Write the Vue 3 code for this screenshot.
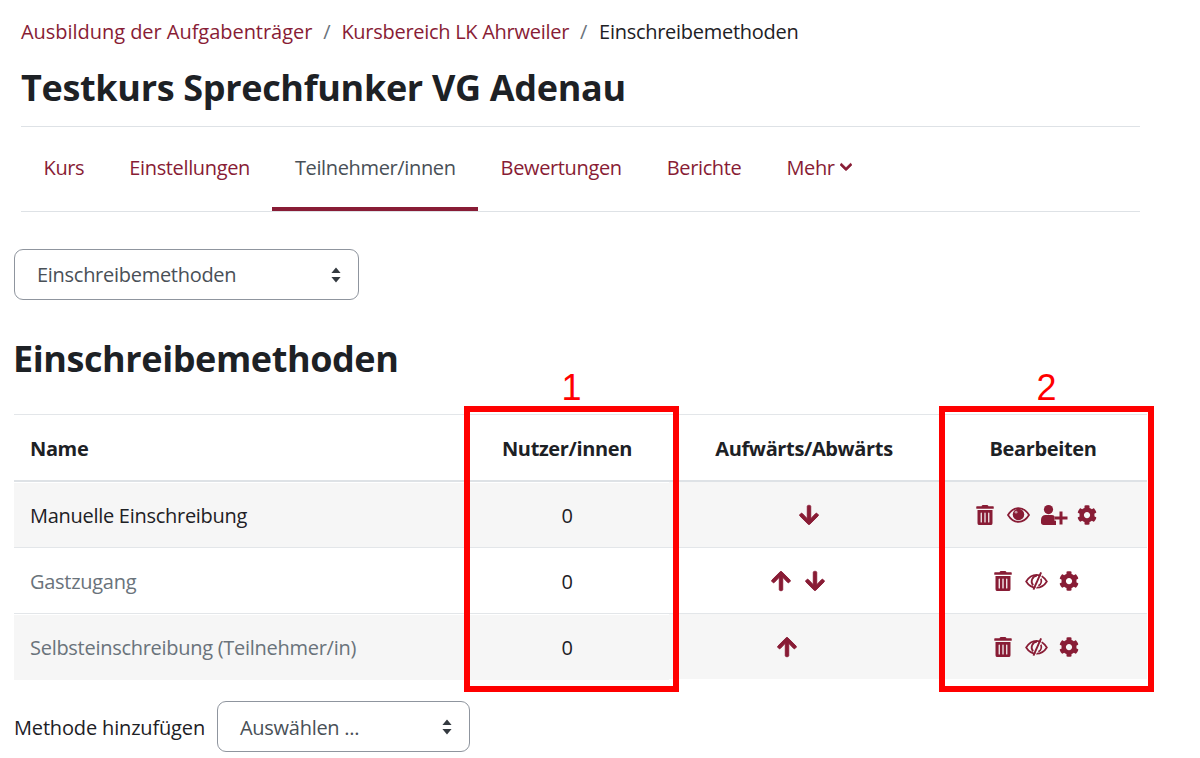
<template>
  <div class="page">
    <header class="course-head">
      <nav class="crumbs">
        <a class="first">Ausbildung der Aufgabenträger</a>
        <span class="sep">/</span>
        <a>Kursbereich LK Ahrweiler</a>
        <span class="sep">/</span>
        <span class="current">Einschreibemethoden</span>
      </nav>
      <h1>Testkurs Sprechfunker VG Adenau</h1>
      <ul class="tabs">
        <li v-for="tab in tabs" :key="tab" :class="{ active: tab === 'Teilnehmer/innen' }">{{ tab }}</li>
        <li class="more">
          Mehr
          <svg viewBox="0 0 448 512" class="chevron"><path :d="icons.chevron" /></svg>
        </li>
      </ul>
    </header>

    <div class="select-box top-select">
      <span>Einschreibemethoden</span>
      <svg viewBox="0 0 10 16" class="caret"><path d="M5 0.5 9.6 6H0.4zM5 15.5 0.4 10h9.2z" /></svg>
    </div>

    <h2>Einschreibemethoden</h2>

    <div class="table-wrap">
      <table>
        <colgroup>
          <col class="col-name" />
          <col class="col-users" />
          <col class="col-move" />
          <col class="col-edit" />
        </colgroup>
        <thead>
          <tr>
            <th class="left">Name</th>
            <th>Nutzer/innen</th>
            <th>Aufwärts/Abwärts</th>
            <th>Bearbeiten</th>
          </tr>
        </thead>
        <tbody>
          <tr v-for="row in rows" :key="row.name" :class="{ off: row.hidden }">
            <td class="left name">{{ row.name }}</td>
            <td class="count">0</td>
            <td>
              <div class="move-icons">
                <svg v-if="row.up" viewBox="0 0 448 512" class="arrow"><path :d="icons.up" /></svg>
                <span v-else class="spacer"></span>
                <svg v-if="row.down" viewBox="0 0 448 512" class="arrow"><path :d="icons.down" /></svg>
                <span v-else class="spacer"></span>
              </div>
            </td>
            <td>
              <div class="edit-icons">
                <svg viewBox="0 0 448 512" class="trash"><path :d="icons.trash" /></svg>
                <svg v-if="row.hidden" viewBox="0 0 24 20" class="eye slash">
                  <path class="eye-line" d="M1.2 10.500C4 6 7.600 3.600 12 3.600s8 2.400 10.800 6.900C20 15 16.400 17 12 17S4 15 1.200 10.500z" />
                  <path class="eye-line" d="M12.500 4.500A6 6 0 0 0 8.500 14.500" />
                  <path class="eye-line" d="M16.500 7.500A6 6 0 0 1 14 15" />
                  <path class="eye-gap" d="M18.300 1.500 10.500 19" />
                  <path class="eye-cut" d="M16.800 1 8.800 19" />
                </svg>
                <svg v-else viewBox="0 0 24 20" class="eye">
                  <path class="eye-line" d="M1 10C4 5.200 7.500 2.800 12 2.800s8 2.400 11 7.200c-3 4.800-6.500 7.200-11 7.200S4 14.800 1 10z" />
                  <circle cx="12" cy="9.500" r="6" />
                  <circle class="glint" cx="9.500" cy="7" r="1.500" />
                </svg>
                <svg v-if="row.enrol" viewBox="0 0 27 20" class="user">
                  <circle cx="7.500" cy="4.600" r="4.600" />
                  <path d="M0 17.500V14.500C0 11.800 2 10 4.500 10h6C13 10 15 11.800 15 14.500V20H2.500C1 20 0 19 0 17.500z" />
                  <path class="plus-halo" d="M20 6.500V19.500M13.500 13H26.500" />
                  <path class="plus" d="M20 6.500V19.500M13.500 13H26.500" />
                </svg>
                <svg viewBox="0 0 512 512" class="cog"><path :d="icons.cog" /></svg>
              </div>
            </td>
          </tr>
        </tbody>
      </table>
      <div class="mark mark-one"><span>1</span></div>
      <div class="mark mark-two"><span>2</span></div>
    </div>

    <div class="add-method">
      <label>Methode hinzufügen</label>
      <div class="select-box add-select">
        <span>Auswählen ...</span>
        <svg viewBox="0 0 10 16" class="caret"><path d="M5 0.5 9.6 6H0.4zM5 15.500 0.400 10h9.200z" /></svg>
      </div>
    </div>
  </div>
</template>

<script setup>
const tabs = ['Kurs', 'Einstellungen', 'Teilnehmer/innen', 'Bewertungen', 'Berichte']

const rows = [
  { name: 'Manuelle Einschreibung', up: false, down: true, hidden: false, enrol: true },
  { name: 'Gastzugang', up: true, down: true, hidden: true, enrol: false },
  { name: 'Selbsteinschreibung (Teilnehmer/in)', up: true, down: false, hidden: true, enrol: false }
]

const icons = {
  chevron: 'M207.029 381.476L12.686 187.132c-9.373-9.373-9.373-24.569 0-33.941l22.667-22.667c9.357-9.357 24.522-9.375 33.901-.04L224 284.505l154.745-154.021c9.379-9.335 24.544-9.317 33.901.04l22.667 22.667c9.373 9.373 9.373 24.569 0 33.941L240.971 381.476c-9.373 9.372-24.569 9.372-33.942 0z',
  up: 'M34.9 289.5l-22.2-22.2c-9.4-9.4-9.4-24.6 0-33.9L207 39c9.4-9.4 24.6-9.4 33.9 0l194.3 194.3c9.4 9.4 9.4 24.6 0 33.9L413 289.4c-9.5 9.5-25 9.3-34.3-.4L264 168.6V456c0 13.3-10.7 24-24 24h-32c-13.3 0-24-10.7-24-24V168.6L69.2 289.1c-9.3 9.8-24.8 10-34.3.4z',
  down: 'M413.1 222.5l22.2 22.2c9.4 9.4 9.4 24.6 0 33.9L241 473c-9.4 9.4-24.6 9.4-33.9 0L12.7 278.6c-9.4-9.4-9.4-24.6 0-33.9l22.2-22.2c9.5-9.5 25-9.3 34.3.4L184 343.4V56c0-13.3 10.7-24 24-24h32c13.3 0 24 10.7 24 24v287.4l114.8-120.5c9.3-9.8 24.8-10 34.3-.4z',
  trash: 'M32 464a48 48 0 0 0 48 48h288a48 48 0 0 0 48-48V128H32zm272-256a16 16 0 0 1 32 0v224a16 16 0 0 1-32 0zm-96 0a16 16 0 0 1 32 0v224a16 16 0 0 1-32 0zm-96 0a16 16 0 0 1 32 0v224a16 16 0 0 1-32 0zM432 32H312l-9.400-18.700A24 24 0 0 0 281.100 0H166.800a23.720 23.720 0 0 0-21.400 13.300L136 32H16A16 16 0 0 0 0 48v32a16 16 0 0 0 16 16h416a16 16 0 0 0 16-16V48a16 16 0 0 0-16-16z',
  cog: 'M487.4 315.7l-42.6-24.6c4.3-23.2 4.3-47 0-70.2l42.6-24.6c4.9-2.8 7.1-8.6 5.5-14-11.1-35.6-30-67.8-54.7-94.6-3.8-4.1-10-5.1-14.8-2.3L380.8 110c-17.9-15.4-38.5-27.3-60.8-35.1V25.8c0-5.6-3.9-10.5-9.4-11.7-36.7-8.2-74.3-7.8-109.2 0-5.5 1.2-9.4 6.1-9.4 11.7V75c-22.2 7.9-42.8 19.8-60.8 35.1L88.7 85.5c-4.9-2.8-11-1.9-14.8 2.3-24.7 26.7-43.6 58.9-54.7 94.6-1.7 5.4.6 11.2 5.5 14L67.3 221c-4.3 23.2-4.3 47 0 70.2l-42.6 24.6c-4.9 2.8-7.1 8.6-5.5 14 11.1 35.6 30 67.8 54.7 94.6 3.8 4.1 10 5.1 14.8 2.3l42.6-24.6c17.9 15.4 38.5 27.3 60.8 35.1v49.2c0 5.6 3.9 10.5 9.4 11.7 36.7 8.2 74.3 7.8 109.2 0 5.5-1.2 9.4-6.1 9.4-11.7v-49.2c22.2-7.9 42.8-19.8 60.8-35.1l42.6 24.6c4.9 2.8 11 1.9 14.8-2.3 24.7-26.7 43.6-58.9 54.7-94.6 1.5-5.5-.7-11.3-5.6-14.1zM256 336c-44.1 0-80-35.9-80-80s35.9-80 80-80 80 35.9 80 80-35.9 80-80 80z'
}
</script>

<style scoped>
.page {
  --primary: #881c35;
  --ink: #1d2125;
  height: 758px;
  overflow: hidden;
  box-sizing: border-box;
  padding: 0 53px 0 14px;
  background: #fff;
  color: var(--ink);
  font-family: "Open Sans", "Noto Sans", sans-serif;
  font-size: 20px;
  letter-spacing: -0.28px;
}

.course-head {
  margin: 0 0 0 7px;
  padding-top: 18px;
  width: 1119px;
}

.crumbs {
  display: flex;
  align-items: center;
  height: 28px;
  font-size: 20px;
  line-height: 28px;
}

.crumbs a {
  color: var(--primary);
}

.crumbs .first {
  letter-spacing: -0.04px;
}

.sep {
  margin: 0 11px;
  color: #6a737b;
}

.current {
  margin-left: 1px;
}

h1 {
  margin: 19px 0 0;
  padding-bottom: 15px;
  border-bottom: 1px solid #dee2e6;
  font-size: 36px;
  line-height: 46px;
  font-weight: 700;
  letter-spacing: -0.33px;
}

.tabs {
  display: flex;
  margin: 0;
  padding: 0;
  list-style: none;
  border-bottom: 1px solid #dee2e6;
}

.tabs li {
  display: flex;
  align-items: center;
  gap: 5px;
  height: 84px;
  box-sizing: border-box;
  padding: 0 22.5px;
  color: var(--primary);
  letter-spacing: -0.36px;
  border-bottom: 4px solid transparent;
}

.tabs li.active {
  color: #495057;
  border-bottom-color: var(--primary);
}

.chevron {
  width: 12px;
  height: 14px;
  fill: var(--primary);
  stroke: var(--primary);
  stroke-width: 30;
}

.select-box {
  display: flex;
  align-items: center;
  justify-content: space-between;
  box-sizing: border-box;
  height: 51px;
  padding: 0 16px 0 22px;
  border: 1px solid #8f959e;
  border-radius: 9px;
  color: #495057;
}

.top-select {
  width: 345px;
  margin-top: 37px;
}

.caret {
  width: 12px;
  height: 16px;
  fill: #343a40;
}

h2 {
  margin: 36px 0 0 -1px;
  font-size: 36px;
  line-height: 46px;
  font-weight: 700;
  letter-spacing: -0.42px;
}

.table-wrap {
  position: relative;
  width: 1133px;
  margin-top: 32px;
}

table {
  width: 100%;
  border-collapse: collapse;
  table-layout: fixed;
}

.col-name { width: 451px; }
.col-users { width: 204px; }
.col-move { width: 270px; }
.col-edit { width: 208px; }

th,
td {
  padding: 0;
  text-align: center;
  border-top: 1px solid #e3e6e9;
}

th {
  height: 64px;
  padding-top: 1px;
  font-weight: 700;
  border-bottom: 2px solid #dee2e6;
  font-size: 20px;
  letter-spacing: -0.36px;
}

td {
  height: 65px;
  border-top: 1px solid #e3e6e9;
}

.left {
  padding-left: 16px;
  text-align: left;
}

td.name,
td.count {
  position: relative;
  top: 1px;
}

tbody tr:nth-child(odd) {
  background: #f6f6f6;
}

.off .name {
  color: #6a737b;
}

.move-icons,
.edit-icons {
  display: flex;
  justify-content: center;
  align-items: center;
}

.move-icons {
  gap: 18px;
  padding-right: 12px;
}

.edit-icons {
  padding-right: 13px;
  fill: var(--primary);
}

.arrow {
  width: 22px;
  height: 22px;
  margin: 0 -3px;
  fill: var(--primary);
  stroke: var(--primary);
  stroke-width: 22;
}

.spacer {
  width: 4px;
}

.trash { width: 18px; height: 20px; margin-right: 13px; }
.eye { width: 23px; height: 20px; margin-right: 11px; }
.user { width: 27px; height: 20px; margin-right: 9px; }
.cog { width: 20px; height: 20px; }

.eye-line,
.eye-cut,
.eye-gap {
  fill: none;
  stroke: var(--primary);
  stroke-width: 1.8;
}

.eye-gap {
  stroke: #fff;
  stroke-width: 1.1;
}

.off:nth-child(odd) .eye-gap {
  stroke: #f6f6f6;
}

.eye-cut {
  stroke-width: 2;
}

.glint {
  fill: #f6f6f6;
  opacity: 0.55;
}

.plus,
.plus-halo {
  fill: none;
  stroke: var(--primary);
  stroke-width: 3;
}

.plus-halo {
  stroke: #f6f6f6;
  stroke-width: 5.5;
}

.mark {
  position: absolute;
  top: -8px;
  width: 215px;
  height: 286px;
  box-sizing: border-box;
  border: 6px solid #ff0000;
}

.mark span {
  position: absolute;
  top: -44px;
  left: 0;
  right: 0;
  text-align: center;
  color: #ff0000;
  font-family: "Liberation Sans", sans-serif;
  font-size: 36px;
  line-height: 40px;
  letter-spacing: 0;
}

.mark-one {
  left: 450px;
}

.mark-two {
  left: 925px;
}

.add-method {
  display: flex;
  align-items: center;
  gap: 12px;
  margin-top: 22px;
}

.add-method label,
.add-select span {
  padding-top: 2px;
}

.add-method label {
  letter-spacing: -0.16px;
}

.add-select {
  width: 253px;
}
</style>

<style>
body {
  margin: 0;
  background: #fff;
}
</style>
